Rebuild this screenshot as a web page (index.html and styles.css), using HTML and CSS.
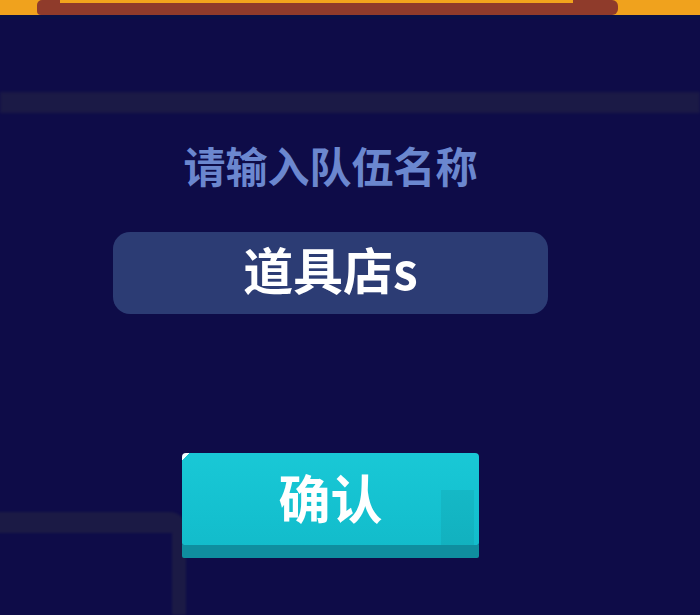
FILE: index.html
```html
<!DOCTYPE html>
<html lang="zh">
<head>
<meta charset="utf-8">
<title>队伍名称</title>
<link rel="stylesheet" href="styles.css">
</head>
<body>
<div class="topbar">
  <div class="topbar-tab"><div class="topbar-stripe"></div></div>
</div>
<div class="topbar-shadow"></div>
<div class="band"></div>
<div class="panel-frame"></div>
<main class="dialog">
  <div class="label">请输入队伍名称</div>
  <div class="field">道具店s</div>
  <button class="confirm">确认</button>
</main>
</body>
</html>
```
FILE: styles.css
```css
html, body {
  margin: 0;
  padding: 0;
}
body {
  width: 700px;
  height: 615px;
  overflow: hidden;
  position: relative;
  background: #0e0c48;
  font-family: "Noto Sans CJK SC", "Noto Sans", sans-serif;
}
.topbar {
  height: 15px;
  background: #f0a21d;
  display: flex;
  padding-left: 37px;
}
.topbar-tab {
  width: 581px;
  height: 15px;
  background: #8f3b2b;
  border-radius: 5px 6px 6px 4px;
}
.topbar-stripe {
  margin-left: 23px;
  width: 513px;
  height: 3px;
  background: #f2a41c;
}
.topbar-shadow {
  height: 4px;
  background: #0a1046;
}
.band {
  margin-top: 73px;
  height: 21px;
  background: #1b1a46;
  filter: blur(1.5px);
}
.panel-frame {
  position: absolute;
  left: -20px;
  top: 512px;
  width: 192px;
  height: 82px;
  border-top: 21px solid #1b1a45;
  border-right: 14px solid #1b1a45;
  border-top-right-radius: 16px;
  filter: blur(1px);
}
.dialog {
  position: relative;
  width: 435px;
  margin-left: 113px;
  display: flex;
  flex-direction: column;
  align-items: center;
}
.label {
  margin-top: 31px;
  font-size: 42px;
  line-height: 42px;
  font-weight: 700;
  color: #6b87cf;
}
.field {
  margin-top: 46px;
  width: 435px;
  height: 82px;
  box-sizing: border-box;
  padding: 11px 0 21px;
  background: #2c3c74;
  border-radius: 17px;
  color: #ffffff;
  font-size: 50px;
  line-height: 50px;
  font-weight: 700;
  text-align: center;
}
.confirm {
  margin-top: 139px;
  width: 297px;
  height: 92px;
  border: 0;
  padding: 0 0 4px;
  border-radius: 4px 4px 2px 2px;
  background:
    linear-gradient(135deg, #f4ffff 0, #f4ffff 5px, transparent 5px) 0 0 / 100% 100% no-repeat,
    linear-gradient(rgba(0,0,0,0.06), rgba(0,0,0,0.06)) 259px 37px / 33px 55px no-repeat,
    linear-gradient(to bottom, #19c8d6 0%, #14c0cf 70%, #13bccb 100%);
  box-shadow: 0 13px 0 #0f8e9f;
  color: #ffffff;
  font-family: "Noto Sans CJK SC", sans-serif;
  font-size: 52px;
  line-height: 52px;
  font-weight: 700;
}
```
